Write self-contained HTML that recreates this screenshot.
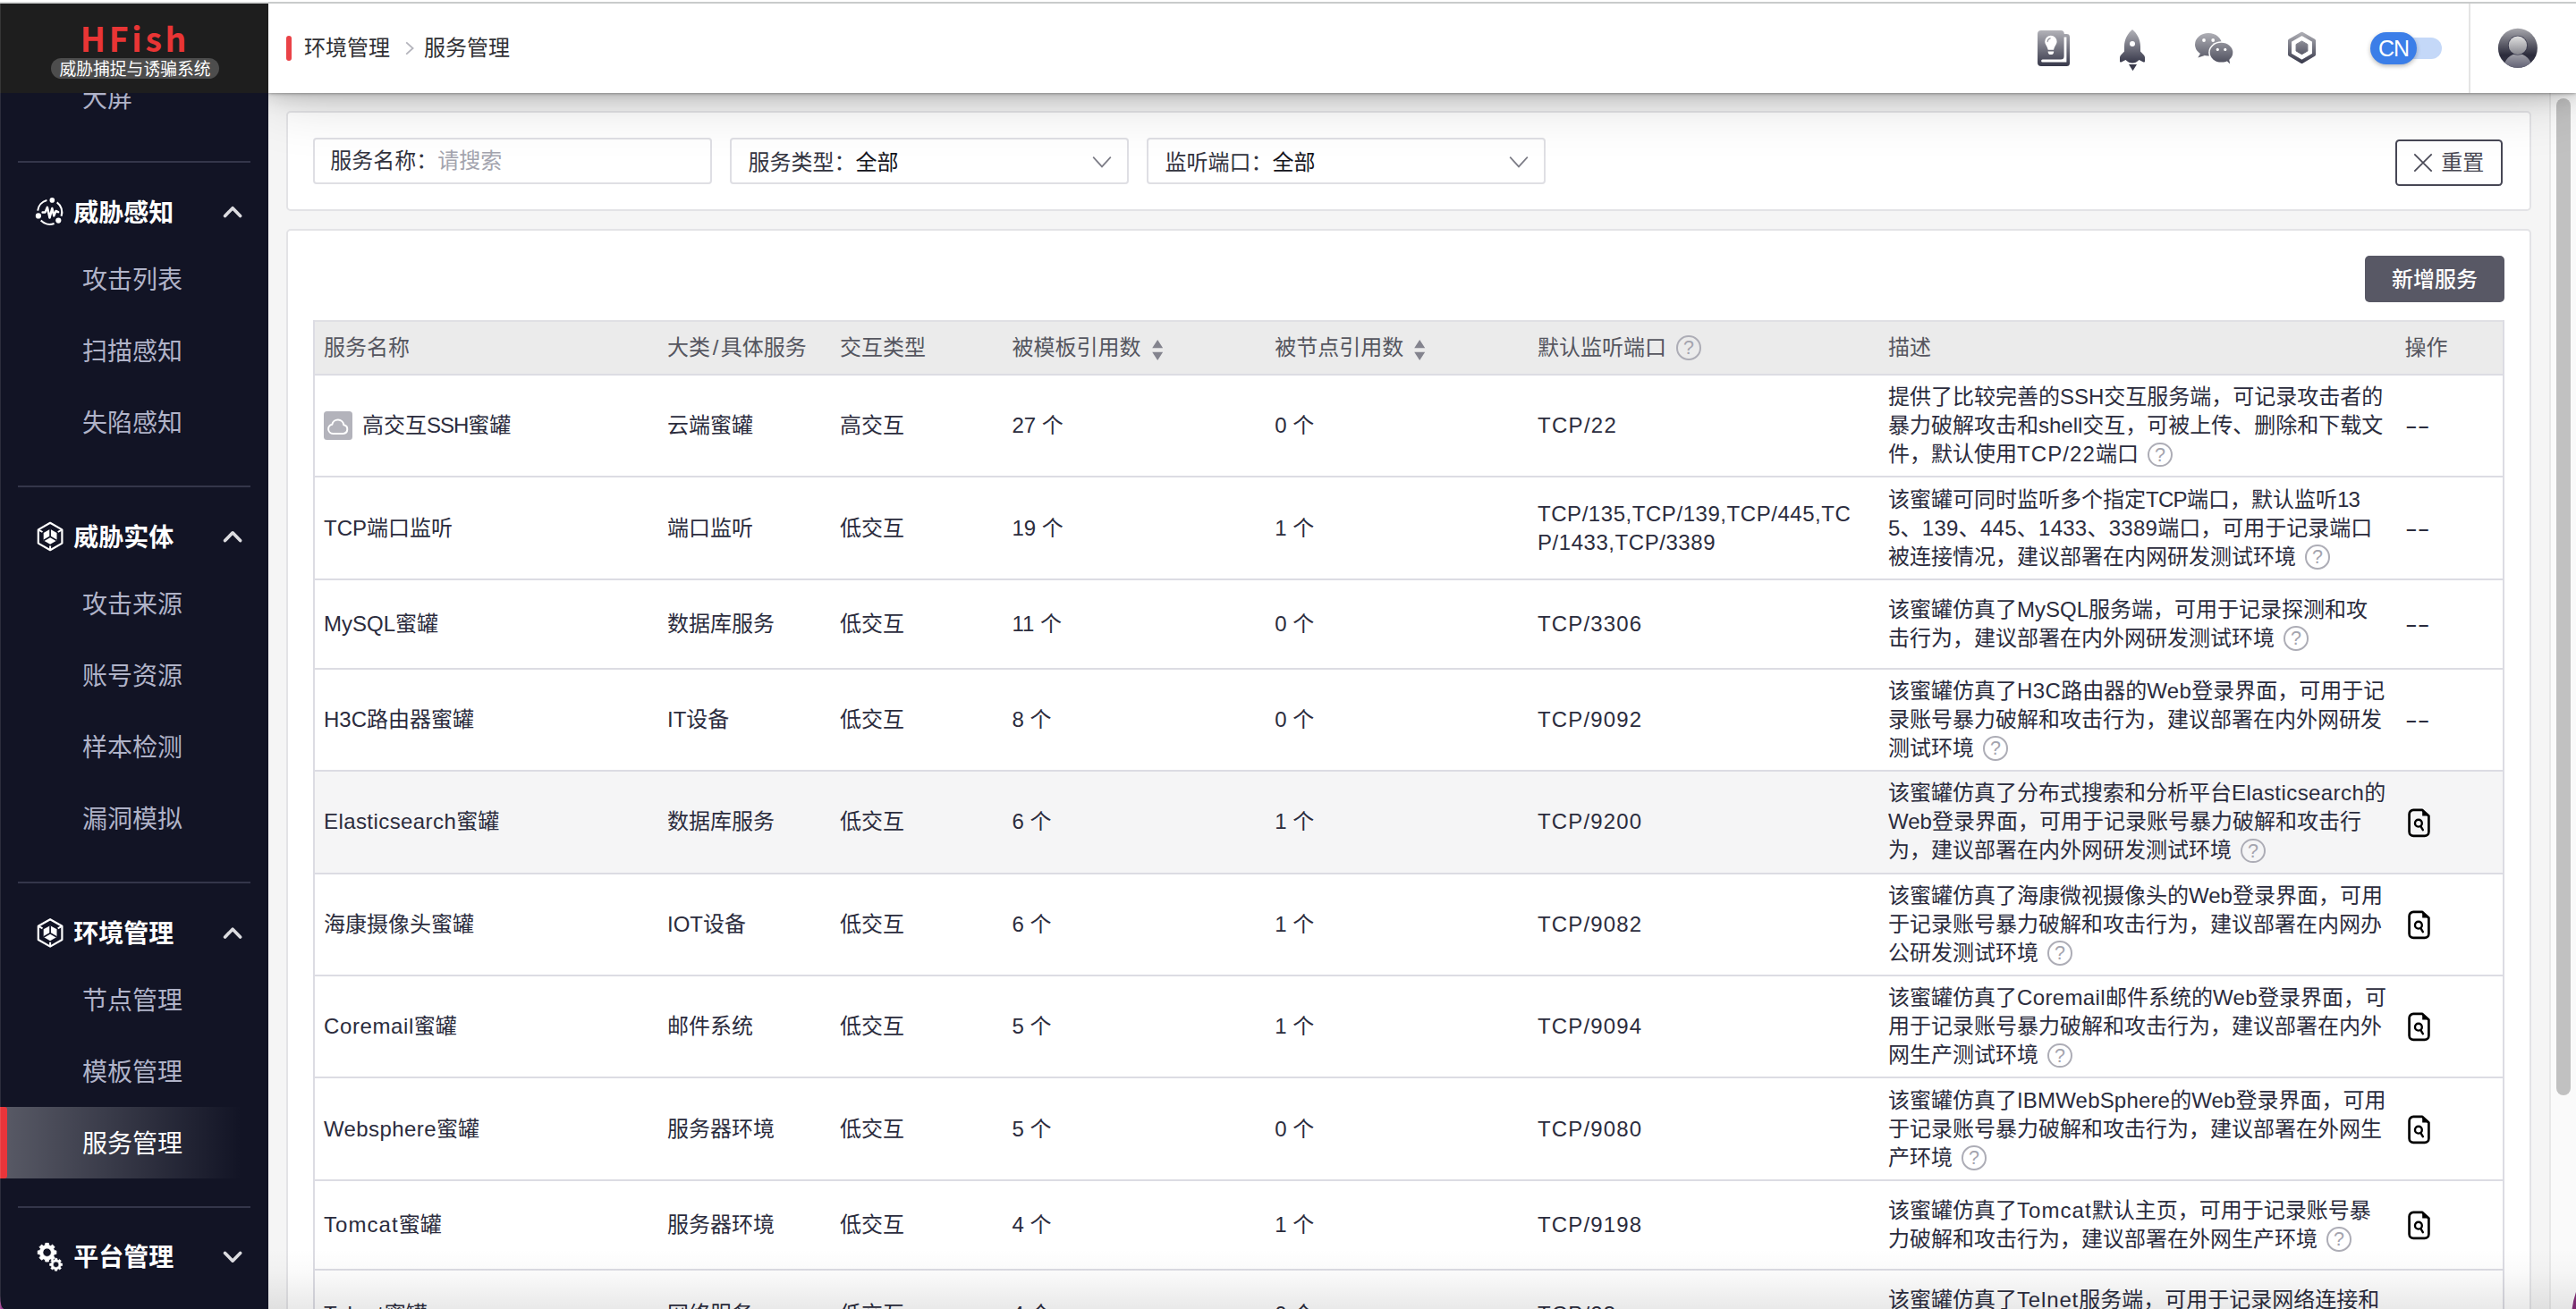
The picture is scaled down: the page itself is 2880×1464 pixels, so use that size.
<!DOCTYPE html>
<html lang="zh-CN">
<head>
<meta charset="utf-8">
<title>HFish - 服务管理</title>
<style>
*{box-sizing:border-box;margin:0;padding:0}
html,body{background:#f5f5f5}
body{width:2880px;height:1464px;overflow:hidden}
body{font-family:"Liberation Sans","Noto Sans CJK SC",sans-serif;color:#2b2c3d;font-size:24px;position:relative}
#app{position:relative;width:2880px;height:1464px;overflow:hidden;background:#f5f5f5}
.abs{position:absolute}
/* top window strip */
#topstrip{left:0;top:0;width:2880px;height:4px;background:#fff;border-bottom:2px solid #c9cbcb;z-index:50}
#topstrip i{position:absolute;left:0;top:2px;width:300px;height:1px;background:#dddfdf}
#corner{left:0;top:1444px;width:12px;height:20px;background:#9a3c8c;z-index:19}
#ledge{left:0;top:4px;width:1px;height:1460px;background:rgba(255,255,255,.11);z-index:21}
/* sidebar */
#side{left:0;top:4px;width:300px;height:1460px;border-bottom-left-radius:4.5px 15px;background:#121425;overflow:hidden;z-index:20}
#logo{left:0;top:0;width:300px;height:100px;background:#1e1e1e;z-index:3}
#logo .t{left:1px;width:300px;top:10.2px;text-align:center;font-family:"Noto Sans CJK SC","Liberation Sans",sans-serif;font-weight:700;font-size:37.4px;line-height:56px;letter-spacing:3.7px;color:#e93535}
#logo .s{left:57px;top:61.4px;width:188px;height:22.6px;border-radius:12px;background:#4d4d4d;color:#fff;font-size:18.8px;line-height:25.4px;text-align:center;font-family:"Liberation Sans","Noto Sans CJK SC",sans-serif;white-space:nowrap}
.sep{left:20px;width:260px;height:2px;background:#34364a}
.grp{left:82.3px;font-weight:700;font-size:28px;line-height:40px;padding-top:3.5px;color:#fff;white-space:nowrap;font-family:"Liberation Sans","Noto Sans CJK SC",sans-serif}
.itm{left:92px;font-size:28px;line-height:40px;padding-top:3.5px;color:#b0b3c8;white-space:nowrap;font-family:"Liberation Sans","Noto Sans CJK SC",sans-serif}
.itm.on{color:#fff}
#act{left:0;top:1234px;width:300px;height:80px;background:linear-gradient(90deg,rgba(255,255,255,.30) 0,rgba(255,255,255,.17) 40%,rgba(255,255,255,0) 90%)}
#act i{position:absolute;left:0;top:0;width:8px;height:80px;background:#e8353a;border-radius:0 3px 3px 0}
.chev{left:250px;width:20px;height:12px}
.gico{left:40px;width:30px;height:32px}
/* header */
#head{left:300px;top:4px;width:2580px;height:100px;background:#fff;box-shadow:0 0 4px rgba(0,0,0,.5),0 0 24px rgba(0,0,0,.23),0 0 70px rgba(0,0,0,.21);z-index:10}
#head .bar{left:20px;top:36px;width:6px;height:28px;border-radius:3px;background:#ea4247}
#head .bc{left:40px;top:30.15px;font-size:24px;line-height:40px;color:#303034;white-space:nowrap;font-family:"Liberation Sans","Noto Sans CJK SC",sans-serif}
#head .vd{left:2460px;top:0;width:2px;height:100px;background:#e4e4e4}
/* content */
.panel{background:#fff;border:2px solid #e3e3e6;border-radius:5px}
#fpanel{left:320px;top:124px;width:2510px;height:112px}
#tpanel{left:320px;top:256px;width:2510px;height:1300px}
.inp{top:154px;width:446px;height:52px;border:2px solid #dfdfe4;border-radius:4px;background:#fff;font-size:24px;line-height:48.3px;padding-left:17.2px;white-space:nowrap;color:#33343f;font-family:"Liberation Sans","Noto Sans CJK SC",sans-serif}
.inp.sel{line-height:51.1px;padding-left:18.4px}
.inp .ph{color:#a3a4ae}
.inp .v{color:#14141c}
#reset{left:2678px;top:156px;width:120px;height:52px;border:2px solid #474755;border-radius:4.5px;background:#fff;font-size:24px;line-height:48px;color:#474752;font-family:"Liberation Sans","Noto Sans CJK SC",sans-serif}
#add{left:2644px;top:286px;width:156px;height:52px;border-radius:5px;background:#585865;color:#fff;font-size:24px;line-height:53.3px;text-align:center;font-weight:500;font-family:"Liberation Sans","Noto Sans CJK SC",sans-serif}
/* scrollbar */
#sbt{left:2850px;top:104px;width:30px;height:1360px;background:#fafafa;border-left:2px solid #e8e8e8;z-index:5}
#sbh{left:2858px;top:110px;width:16px;height:1115px;border-radius:8px;background:#c1c1c1;z-index:6}
/* table */
#tbl{left:350px;top:358px;width:2450px;border-collapse:separate;border-spacing:0;table-layout:fixed;border-left:2px solid #dcdce3;border-right:2px solid #dcdce3}
#tbl th{height:62px;line-height:32px;background:#ebebeb;font-weight:400;color:#55565f;text-align:left;padding:0 0 0 10px;border-top:2px solid #e0e0e4;border-bottom:2px solid #dcdce3;white-space:nowrap}
#tbl td{padding:0 0 0 10px;border-bottom:2px solid #dcdce3;line-height:32px;vertical-align:middle;white-space:nowrap;background:#fff}
#tbl tr.hv td{background:#f5f5f6}
#tbl tr.h3 td{height:114.4px}
#tbl tr.h2 td{height:100px}
.q{display:inline-block;width:27.6px;height:27.6px;border:2px solid #adadb6;border-radius:50%;vertical-align:-6px;margin-left:10px;position:relative}
.q b{position:absolute;left:0;top:0;width:24px;text-align:center;font-weight:400;font-size:21.5px;line-height:24px;color:#a4a4ae;font-family:"Liberation Sans",sans-serif}
.sort{display:inline-block;width:12.4px;height:23px;vertical-align:-6px;margin-left:12px}
.dd{display:inline-block;transform:scaleX(1.72);transform-origin:left center}
.doc{display:block;margin-left:3.6px;position:relative;top:.8px}
.l{letter-spacing:.6px}
.p{letter-spacing:1.15px}
#botfade{left:300px;top:1396px;width:2580px;height:68px;background:linear-gradient(180deg,rgba(0,0,0,0),rgba(0,0,0,.018) 40%,rgba(0,0,0,.085));z-index:60}
</style>
</head>
<body>
<div id="app">
<div id="topstrip" class="abs"><i></i></div>
<div id="corner" class="abs"></div><div id="ledge" class="abs"></div>

<!-- SIDEBAR -->
<div id="side" class="abs">
  <div class="abs itm" style="top:83.5px">大屏</div>
  <div id="logo" class="abs"><div class="abs t">HFish</div><div class="abs s">威胁捕捉与诱骗系统</div></div>
  <div class="abs sep" style="top:176px"></div>
  <div class="abs grp" style="top:211.9px">威胁感知</div>
  <div class="abs itm" style="top:286.5px">攻击列表</div>
  <div class="abs itm" style="top:366.5px">扫描感知</div>
  <div class="abs itm" style="top:446.5px">失陷感知</div>
  <div class="abs sep" style="top:539px"></div>
  <div class="abs grp" style="top:574.9px">威胁实体</div>
  <div class="abs itm" style="top:649.5px">攻击来源</div>
  <div class="abs itm" style="top:729.5px">账号资源</div>
  <div class="abs itm" style="top:809.5px">样本检测</div>
  <div class="abs itm" style="top:889.5px">漏洞模拟</div>
  <div class="abs sep" style="top:982px"></div>
  <div class="abs grp" style="top:1017.3px">环境管理</div>
  <div class="abs itm" style="top:1092.5px">节点管理</div>
  <div class="abs itm" style="top:1172.5px">模板管理</div>
  <div id="act" class="abs"><i></i></div>
  <div class="abs itm on" style="top:1252.5px">服务管理</div>
  <div class="abs sep" style="top:1345px"></div>
  <svg class="abs" style="left:0;top:0;z-index:2" width="300" height="1460" viewBox="0 4 300 1460"><path d="M63.69,226.30 A13.60,13.60 0 0 1 68.56,241.73M60.57,250.00 A13.60,13.60 0 0 1 45.75,246.58M42.20,235.64 A13.60,13.60 0 0 1 52.41,224.10" fill="none" stroke="#fff" stroke-width="2.1"/><circle cx="58.3" cy="223.9" r="2.8" fill="#fff"/><circle cx="42.9" cy="241.4" r="3.1" fill="#fff"/><circle cx="65.3" cy="246.6" r="3.1" fill="#fff"/><path d="M47.6,237.4 h3 l2.3,-5.6 l2.6,11.8 l2.8,-10.6 l2,8.4 l2.2,-5.4 l2.6,1.2" fill="none" stroke="#fff" stroke-width="2.5" stroke-linejoin="round" stroke-linecap="round"/><path d="M251.6,241.5 L260.1,232.7 L268.6,241.5" fill="none" stroke="#dcdce0" stroke-width="3.6" stroke-linecap="round" stroke-linejoin="round"/><path d="M56.1,584.8 L69.4,592.4 L69.4,607.6 L56.1,615.2 L42.8,607.6 L42.8,592.4Z" fill="none" stroke="#fff" stroke-width="2.2" stroke-linejoin="round"/><path d="M56.1,591.8 L63.5,595.9 L63.5,604.5 L56.1,608.8 L48.7,604.5 L48.7,595.9Z" fill="#fff"/><path d="M56.1,600.3 V591.8 M56.1,600.3 L48.7,604.5 M56.1,600.3 L63.5,604.5" stroke="#121425" stroke-width="1.7" fill="none"/><path d="M43.6,592.8 L47.5,595.0 M68.6,592.8 L64.7,595.0 M56.1,614.5 V610.4" stroke="#fff" stroke-width="2" fill="none"/><path d="M251.6,604.6 L260.1,595.8 L268.6,604.6" fill="none" stroke="#dcdce0" stroke-width="3.6" stroke-linecap="round" stroke-linejoin="round"/><g transform="translate(0,1.4)"><path d="M56.1,1026.8 L69.4,1034.4 L69.4,1049.6 L56.1,1057.2 L42.8,1049.6 L42.8,1034.4Z" fill="none" stroke="#fff" stroke-width="2.2" stroke-linejoin="round"/><path d="M56.1,1033.8 L63.5,1037.9 L63.5,1046.5 L56.1,1050.8 L48.7,1046.5 L48.7,1037.9Z" fill="#fff"/><path d="M56.1,1042.3 V1033.8 M56.1,1042.3 L48.7,1046.5 M56.1,1042.3 L63.5,1046.5" stroke="#121425" stroke-width="1.7" fill="none"/><path d="M43.6,1034.8 L47.5,1037.0 M68.6,1034.8 L64.7,1037.0 M56.1,1056.5 V1052.4" stroke="#fff" stroke-width="2" fill="none"/><path d="M251.6,1046.6 L260.1,1037.8 L268.6,1046.6" fill="none" stroke="#dcdce0" stroke-width="3.6" stroke-linecap="round" stroke-linejoin="round"/></g><path d="M60.62,1398.57 L62.94,1398.89 L62.94,1402.51 L60.62,1402.83 L59.78,1404.87 L61.19,1406.74 L58.64,1409.29 L56.77,1407.88 L54.73,1408.72 L54.41,1411.04 L50.79,1411.04 L50.47,1408.72 L48.43,1407.88 L46.56,1409.29 L44.01,1406.74 L45.42,1404.87 L44.58,1402.83 L42.26,1402.51 L42.26,1398.89 L44.58,1398.57 L45.42,1396.53 L44.01,1394.66 L46.56,1392.11 L48.43,1393.52 L50.47,1392.68 L50.79,1390.36 L54.41,1390.36 L54.73,1392.68 L56.77,1393.52 L58.64,1392.11 L61.19,1394.66 L59.78,1396.53ZM47.90,1400.70 a4.70,4.70 0 1 0 9.40,0 a4.70,4.70 0 1 0 -9.40,0Z" fill="#fff" fill-rule="evenodd" stroke="#fff" stroke-width=".8" stroke-linejoin="round"/><path d="M67.92,1412.89 L69.59,1413.08 L69.59,1415.52 L67.92,1415.71 L67.36,1417.06 L68.41,1418.38 L66.68,1420.11 L65.36,1419.06 L64.01,1419.62 L63.82,1421.29 L61.38,1421.29 L61.19,1419.62 L59.84,1419.06 L58.52,1420.11 L56.79,1418.38 L57.84,1417.06 L57.28,1415.71 L55.61,1415.52 L55.61,1413.08 L57.28,1412.89 L57.84,1411.54 L56.79,1410.22 L58.52,1408.49 L59.84,1409.54 L61.19,1408.98 L61.38,1407.31 L63.82,1407.31 L64.01,1408.98 L65.36,1409.54 L66.68,1408.49 L68.41,1410.22 L67.36,1411.54ZM59.40,1414.30 a3.20,3.20 0 1 0 6.40,0 a3.20,3.20 0 1 0 -6.40,0Z" fill="#fff" fill-rule="evenodd" stroke="#fff" stroke-width=".6" stroke-linejoin="round"/><path d="M251.6,1401.4 L260.1,1410.2 L268.6,1401.4" fill="none" stroke="#dcdce0" stroke-width="3.6" stroke-linecap="round" stroke-linejoin="round"/></svg>
  <div class="abs grp" style="top:1379.9px">平台管理</div>
</div>

<!-- HEADER -->
<div id="head" class="abs">
  <div class="abs bar"></div>
  <div class="abs bc">环境管理<svg width="38" height="20" viewBox="0 0 38 20" style="vertical-align:-2px"><path d="M18.2,3.4 L25.6,10 L18.2,16.6" fill="none" stroke="#b4b4bc" stroke-width="1.8"/></svg>服务管理</div>
  <div class="abs vd"></div>
  <svg class="abs" style="left:0;top:0" width="2580" height="100" viewBox="300 4 2580 100">
<defs>
<linearGradient id="gg" x1="0" y1="0" x2="0" y2="1"><stop offset="0" stop-color="#b2b2b8"/><stop offset="1" stop-color="#37384a"/></linearGradient>
<linearGradient id="gw" gradientUnits="userSpaceOnUse" x1="0" y1="36" x2="0" y2="72"><stop offset="0" stop-color="#b2b2b8"/><stop offset="1" stop-color="#4a4b5a"/></linearGradient>
<linearGradient id="gh" gradientUnits="userSpaceOnUse" x1="0" y1="35" x2="0" y2="71"><stop offset="0" stop-color="#b2b2b8"/><stop offset="1" stop-color="#37384a"/></linearGradient>
<linearGradient id="ga" x1="0" y1="0" x2="0" y2="1"><stop offset="0" stop-color="#a6a6ac"/><stop offset=".68" stop-color="#2b2b3b"/><stop offset="1" stop-color="#3a3a4a"/></linearGradient>
<linearGradient id="gb" x1="0" y1="0" x2="0" y2="1"><stop offset="0" stop-color="#e0e0e0"/><stop offset="1" stop-color="#86868e"/></linearGradient>
<linearGradient id="gc" x1="0" y1="0" x2="0" y2="1"><stop offset="0" stop-color="#a2a2aa"/><stop offset=".6" stop-color="#55556a"/><stop offset="1" stop-color="#444452"/></linearGradient>
<clipPath id="cav"><circle cx="2814.9" cy="53.8" r="22"/></clipPath>
</defs>
<g transform="translate(2278,34)">
<path d="M4,0 H26 a3.8,3.8 0 0 1 3.8,3.8 V4 H32.5 a3.5,3.5 0 0 1 3.5,3.5 V36.5 a3.5,3.5 0 0 1 -3.5,3.5 H4 a4,4 0 0 1 -4,-4 V4 a4,4 0 0 1 4,-4z" fill="url(#gg)"/>
<path d="M29.6,7.6 h2.8 V35.6 H5.6 a1.5,1.5 0 0 1 0,-3 H26 a3.6,3.6 0 0 0 3.6,-3.6z" fill="#fff"/>
<path d="M14.9,5.8 a6.7,6.7 0 0 1 6.7,6.7 c0,3 -2.4,4.6 -3.5,9.2 h-6.4 c-1.1,-4.6 -3.5,-6.2 -3.5,-9.2 a6.7,6.7 0 0 1 6.7,-6.7z" fill="#fff"/>
<path d="M11.6,23.4 h6.6 a3.3,3.6 0 0 1 -6.6,0z" fill="#fff"/>
<path d="M11.2,12.6 a4,4 0 0 1 3,-3.8" fill="none" stroke="#9a9aa2" stroke-width="1.2" stroke-linecap="round"/>
</g>
<g transform="translate(2370,33)">
<path d="M14,0 C19,4 23,11 23,19 V24.5 L27.2,29 Q28,30 28,31.5 V35.5 Q28,37 26.5,36.4 L21.5,34 Q18,37.6 14,37.6 Q10,37.6 6.5,34 L1.5,36.4 Q0,37 0,35.5 V31.5 Q0,30 0.8,29 L5,24.5 V19 C5,11 9,4 14,0z" fill="url(#gg)"/>
<circle cx="14" cy="16.1" r="3" fill="#fff"/>
<path d="M10,38.9 h9 l-4.5,7.3z" fill="#3a3b4c"/>
</g>
<g fill="url(#gw)">
<ellipse cx="2469" cy="49.7" rx="15" ry="12.8"/>
<path d="M2460.5,59 L2457.3,64.4 L2465,62z"/>
<ellipse cx="2483.5" cy="58.7" rx="14.3" ry="12.4" fill="#fff"/>
<ellipse cx="2483.5" cy="58.7" rx="12.8" ry="10.9"/>
<path d="M2489,67.6 L2493.2,71.6 L2492,65.6z"/>
</g>
<g fill="#fff"><circle cx="2464" cy="45" r="1.9"/><circle cx="2474.2" cy="45" r="1.9"/><circle cx="2479.3" cy="55.4" r="1.55"/><circle cx="2487.8" cy="55.4" r="1.55"/></g>
<path d="M2573.50,37.70 L2587.01,45.50 L2587.01,61.10 L2573.50,68.90 L2559.99,61.10 L2559.99,45.50Z" fill="none" stroke="url(#gh)" stroke-width="4" stroke-linejoin="round"/>
<path d="M2573.50,45.90 L2579.91,49.60 L2579.91,57.00 L2573.50,60.70 L2567.09,57.00 L2567.09,49.60Z" fill="url(#gh)" stroke="url(#gh)" stroke-width="1" stroke-linejoin="round"/>
<circle cx="2814.9" cy="53.8" r="22" fill="url(#ga)"/>
<g clip-path="url(#cav)">
<ellipse cx="2814.9" cy="76" rx="15.6" ry="16" fill="url(#gc)"/>
<circle cx="2814.9" cy="50.8" r="11" fill="#34344a" opacity=".75"/>
<circle cx="2814.9" cy="50.8" r="10.2" fill="url(#gb)"/>
</g>
</svg>
  <div class="abs" style="left:2355px;top:38px;width:75px;height:24px;border-radius:12px;background:#c4d8f8"></div>
  <div class="abs" style="left:2350px;top:32px;width:52px;height:36px;border-radius:18px;background:#3b7ee8;box-shadow:0 2px 5px rgba(0,0,0,.28);color:#fff;font-family:'Liberation Sans',sans-serif;font-size:25px;line-height:36px;text-align:center;letter-spacing:-1px">CN</div>
</div>

<!-- CONTENT -->
<div id="fpanel" class="abs panel"></div>
<div class="abs inp" style="left:350px">服务名称：<span class="ph">请搜索</span></div>
<div class="abs inp sel" style="left:816px">服务类型：<span class="v">全部</span><svg class="abs" style="left:402px;top:16.6px" width="24" height="16" viewBox="0 0 24 16"><path d="M2.2,2.6 L12,13.4 L21.8,2.6" fill="none" stroke="#7c7c86" stroke-width="1.7"/></svg></div>
<div class="abs inp sel" style="left:1282px">监听端口：<span class="v">全部</span><svg class="abs" style="left:402px;top:16.6px" width="24" height="16" viewBox="0 0 24 16"><path d="M2.2,2.6 L12,13.4 L21.8,2.6" fill="none" stroke="#7c7c86" stroke-width="1.7"/></svg></div>
<div id="reset" class="abs"><svg class="abs" style="left:17.2px;top:12px" width="24" height="24" viewBox="0 0 24 24"><path d="M2.3,2.3 L21.7,21.7 M21.7,2.3 L2.3,21.7" stroke="#4a4a57" stroke-width="1.7" fill="none"/></svg><span style="position:absolute;left:49.2px;top:.15px">重置</span></div>

<div id="tpanel" class="abs panel"></div>
<div id="add" class="abs">新增服务</div>

<table id="tbl" class="abs">
<colgroup><col style="width:384px"><col style="width:193px"><col style="width:192.5px"><col style="width:293.75px"><col style="width:293.75px"><col style="width:392px"><col style="width:577.5px"><col style="width:119.5px"></colgroup>
<thead><tr><th>服务名称</th><th>大类<span style="margin:0 2.4px 0 2.8px">/</span>具体服务</th><th>交互类型</th><th>被模板引用数<svg class="sort" viewBox="0 0 12 23"><path d="M6,0 L12,9.3 H0z M6,23 L12,13.7 H0z" fill="#84848e"/></svg></th><th>被节点引用数<svg class="sort" viewBox="0 0 12 23"><path d="M6,0 L12,9.3 H0z M6,23 L12,13.7 H0z" fill="#84848e"/></svg></th><th>默认监听端口<span class="q" style="margin-left:11px"><b>?</b></span></th><th>描述</th><th>操作</th></tr></thead>
<tbody>
<tr class="h3"><td><svg width="32" height="32" viewBox="0 0 32 32" style="vertical-align:-8px;margin:0 11px 0 0"><rect width="32" height="32" rx="3.5" fill="#b3b3bb"/><path d="M10.2,25 a5.2,5.2 0 0 1 -0.9,-10.3 a6.6,6.6 0 0 1 13,0.6 a4.9,4.9 0 0 1 -0.6,9.7z" fill="none" stroke="#fff" stroke-width="2" stroke-linejoin="round"/></svg>高交互<span style="letter-spacing:-1px">SSH</span>蜜罐</td><td>云端蜜罐</td><td>高交互</td><td>27 个</td><td>0 个</td><td class="p" style="letter-spacing:1.3px">TCP/22</td><td>提供了比较完善的SSH交互服务端，可记录攻击者的<br>暴力破解攻击和shell交互，可被上传、删除和下载文<br>件，默认使用<span style="letter-spacing:1.1px">TCP/22</span>端口<span class="q"><b>?</b></span></td><td><span class="dd">--</span></td></tr>
<tr class="h3"><td>TCP端口监听</td><td>端口监听</td><td>低交互</td><td>19 个</td><td>1 个</td><td class="p" style="letter-spacing:.55px">TCP/135,TCP/139,TCP/445,TC<br>P/1433,TCP/3389</td><td>该蜜罐可同时监听多个指定<span style="letter-spacing:-.7px">TCP</span>端口，默认监听<span style="letter-spacing:-.7px">13</span><br><span style="letter-spacing:.26px">5、139、445、1433、3389</span>端口，可用于记录端口<br>被连接情况，建议部署在内网研发测试环境<span class="q"><b>?</b></span></td><td><span class="dd">--</span></td></tr>
<tr class="h2"><td>MySQL蜜罐</td><td>数据库服务</td><td>低交互</td><td>11 个</td><td>0 个</td><td class="p">TCP/3306</td><td>该蜜罐仿真了MySQL服务端，可用于记录探测和攻<br>击行为，建议部署在内外网研发测试环境<span class="q"><b>?</b></span></td><td><span class="dd">--</span></td></tr>
<tr class="h3"><td>H3C路由器蜜罐</td><td>IT设备</td><td>低交互</td><td>8 个</td><td>0 个</td><td class="p">TCP/9092</td><td>该蜜罐仿真了<span style="letter-spacing:.4px">H3C</span>路由器的<span style="letter-spacing:.4px">Web</span>登录界面，可用于记<br>录账号暴力破解和攻击行为，建议部署在内外网研发<br>测试环境<span class="q"><b>?</b></span></td><td><span class="dd">--</span></td></tr>
<tr class="h3 hv"><td><span class="l" style="letter-spacing:.42px">Elasticsearch</span>蜜罐</td><td>数据库服务</td><td>低交互</td><td>6 个</td><td>1 个</td><td class="p">TCP/9200</td><td>该蜜罐仿真了分布式搜索和分析平台<span style="letter-spacing:.42px">Elasticsearch</span>的<br>Web登录界面，可用于记录账号暴力破解和攻击行<br>为，建议部署在内外网研发测试环境<span class="q"><b>?</b></span></td><td><svg class="doc" width="26" height="33" viewBox="0 0 26 33"><path d="M6.2,1.9 H16.2 L23.4,8.6 V26.2 a4.6,4.6 0 0 1 -4.6,4.6 H6.2 a4.6,4.6 0 0 1 -4.6,-4.6 V6.5 a4.6,4.6 0 0 1 4.6,-4.6z" fill="none" stroke="#000" stroke-width="2.7" stroke-linejoin="round"/><path d="M16.2,1.2 V8.6 H24z" fill="#000"/><circle cx="11.9" cy="16.7" r="3.9" fill="none" stroke="#000" stroke-width="2.4"/><path d="M14.4,20.2 L16.8,24.2" stroke="#000" stroke-width="2.4" stroke-linecap="round"/></svg></td></tr>
<tr class="h3"><td>海康摄像头蜜罐</td><td>IOT设备</td><td>低交互</td><td>6 个</td><td>1 个</td><td class="p">TCP/9082</td><td>该蜜罐仿真了海康微视摄像头的Web登录界面，可用<br>于记录账号暴力破解和攻击行为，建议部署在内网办<br>公研发测试环境<span class="q"><b>?</b></span></td><td><svg class="doc" width="26" height="33" viewBox="0 0 26 33"><path d="M6.2,1.9 H16.2 L23.4,8.6 V26.2 a4.6,4.6 0 0 1 -4.6,4.6 H6.2 a4.6,4.6 0 0 1 -4.6,-4.6 V6.5 a4.6,4.6 0 0 1 4.6,-4.6z" fill="none" stroke="#000" stroke-width="2.7" stroke-linejoin="round"/><path d="M16.2,1.2 V8.6 H24z" fill="#000"/><circle cx="11.9" cy="16.7" r="3.9" fill="none" stroke="#000" stroke-width="2.4"/><path d="M14.4,20.2 L16.8,24.2" stroke="#000" stroke-width="2.4" stroke-linecap="round"/></svg></td></tr>
<tr class="h3"><td><span class="l">Coremail</span>蜜罐</td><td>邮件系统</td><td>低交互</td><td>5 个</td><td>1 个</td><td class="p">TCP/9094</td><td>该蜜罐仿真了<span style="letter-spacing:.37px">Coremail</span>邮件系统的<span style="letter-spacing:.37px">Web</span>登录界面，可<br>用于记录账号暴力破解和攻击行为，建议部署在内外<br>网生产测试环境<span class="q"><b>?</b></span></td><td><svg class="doc" width="26" height="33" viewBox="0 0 26 33"><path d="M6.2,1.9 H16.2 L23.4,8.6 V26.2 a4.6,4.6 0 0 1 -4.6,4.6 H6.2 a4.6,4.6 0 0 1 -4.6,-4.6 V6.5 a4.6,4.6 0 0 1 4.6,-4.6z" fill="none" stroke="#000" stroke-width="2.7" stroke-linejoin="round"/><path d="M16.2,1.2 V8.6 H24z" fill="#000"/><circle cx="11.9" cy="16.7" r="3.9" fill="none" stroke="#000" stroke-width="2.4"/><path d="M14.4,20.2 L16.8,24.2" stroke="#000" stroke-width="2.4" stroke-linecap="round"/></svg></td></tr>
<tr class="h3"><td><span class="l" style="letter-spacing:.4px">Websphere</span>蜜罐</td><td>服务器环境</td><td>低交互</td><td>5 个</td><td>0 个</td><td class="p">TCP/9080</td><td>该蜜罐仿真了<span style="letter-spacing:.18px">IBMWebSphere</span>的<span style="letter-spacing:.18px">Web</span>登录界面，可用<br>于记录账号暴力破解和攻击行为，建议部署在外网生<br>产环境<span class="q"><b>?</b></span></td><td><svg class="doc" width="26" height="33" viewBox="0 0 26 33"><path d="M6.2,1.9 H16.2 L23.4,8.6 V26.2 a4.6,4.6 0 0 1 -4.6,4.6 H6.2 a4.6,4.6 0 0 1 -4.6,-4.6 V6.5 a4.6,4.6 0 0 1 4.6,-4.6z" fill="none" stroke="#000" stroke-width="2.7" stroke-linejoin="round"/><path d="M16.2,1.2 V8.6 H24z" fill="#000"/><circle cx="11.9" cy="16.7" r="3.9" fill="none" stroke="#000" stroke-width="2.4"/><path d="M14.4,20.2 L16.8,24.2" stroke="#000" stroke-width="2.4" stroke-linecap="round"/></svg></td></tr>
<tr class="h2"><td><span class="l" style="letter-spacing:1.05px">Tomcat</span>蜜罐</td><td>服务器环境</td><td>低交互</td><td>4 个</td><td>1 个</td><td class="p">TCP/9198</td><td>该蜜罐仿真了<span style="letter-spacing:1.05px">Tomcat</span>默认主页，可用于记录账号暴<br>力破解和攻击行为，建议部署在外网生产环境<span class="q"><b>?</b></span></td><td><svg class="doc" width="26" height="33" viewBox="0 0 26 33"><path d="M6.2,1.9 H16.2 L23.4,8.6 V26.2 a4.6,4.6 0 0 1 -4.6,4.6 H6.2 a4.6,4.6 0 0 1 -4.6,-4.6 V6.5 a4.6,4.6 0 0 1 4.6,-4.6z" fill="none" stroke="#000" stroke-width="2.7" stroke-linejoin="round"/><path d="M16.2,1.2 V8.6 H24z" fill="#000"/><circle cx="11.9" cy="16.7" r="3.9" fill="none" stroke="#000" stroke-width="2.4"/><path d="M14.4,20.2 L16.8,24.2" stroke="#000" stroke-width="2.4" stroke-linecap="round"/></svg></td></tr>
<tr class="h2"><td><span class="l">Telnet</span>蜜罐</td><td>网络服务</td><td>低交互</td><td>4 个</td><td>0 个</td><td class="p">TCP/23</td><td>该蜜罐仿真了<span style="letter-spacing:.85px">Telnet</span>服务端，可用于记录网络连接和<br>攻击行为，建议部署在内外网研发测试环境<span class="q"><b>?</b></span></td><td><span class="dd">--</span></td></tr>
</tbody>
</table>

<div id="sbt" class="abs"></div>
<div id="botfade" class="abs"></div>
<svg class="abs" style="left:2870px;top:1440px;z-index:70" width="10" height="24" viewBox="2870 1440 10 24"><path d="M2880,1445 Q2876.6,1455 2875.6,1464 L2880,1464Z" fill="#7a2c70"/></svg>
<div id="sbh" class="abs"></div>
</div>
<script>(function(){function f(){var w=window.innerWidth,k=(w&&w!==2880)?w/2880:1,a=document.getElementById("app"),b=document.body;if(!a)return;a.style.transformOrigin="0 0";a.style.transform=k===1?"none":"scale("+k+")";b.style.width=(2880*k)+"px";b.style.height=(1464*k)+"px";}f();window.addEventListener("resize",f);})();</script>
</body>
</html>
